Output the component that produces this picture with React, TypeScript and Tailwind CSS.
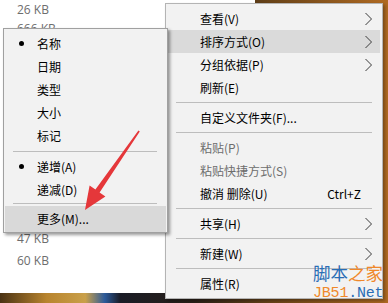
type Row =
  | { kind: 'sep'; h?: string }
  | {
      kind: 'item';
      label: string;
      bullet?: boolean;
      arrow?: boolean;
      disabled?: boolean;
      shortcut?: string;
      active?: boolean;
      h?: string;
    };

const rightRows: Row[] = [
  { kind: 'item', label: '查看(V)', arrow: true },
  { kind: 'item', label: '排序方式(O)', arrow: true, active: true },
  { kind: 'item', label: '分组依据(P)', arrow: true },
  { kind: 'item', label: '刷新(E)' },
  { kind: 'sep' },
  { kind: 'item', label: '自定义文件夹(F)...' },
  { kind: 'sep' },
  { kind: 'item', label: '粘贴(P)', disabled: true },
  { kind: 'item', label: '粘贴快捷方式(S)', disabled: true },
  { kind: 'item', label: '撤消 删除(U)', shortcut: 'Ctrl+Z' },
  { kind: 'sep' },
  { kind: 'item', label: '共享(H)', arrow: true },
  { kind: 'sep' },
  { kind: 'item', label: '新建(W)', arrow: true },
  { kind: 'sep' },
  { kind: 'item', label: '属性(R)' },
];

const leftRows: Row[] = [
  { kind: 'item', label: '名称', bullet: true },
  { kind: 'item', label: '日期' },
  { kind: 'item', label: '类型' },
  { kind: 'item', label: '大小' },
  { kind: 'item', label: '标记' },
  { kind: 'sep', h: 'h-[8px]' },
  { kind: 'item', label: '递增(A)', bullet: true },
  { kind: 'item', label: '递减(D)' },
  { kind: 'sep', h: 'h-[5px]' },
  { kind: 'item', label: '更多(M)...', active: true, h: 'h-[26px]' },
];

function Chevron() {
  return (
    <svg width="9" height="14" viewBox="0 0 9 14" className="flex-shrink-0">
      <path d="M1.5 1 L7.5 7 L1.5 13" fill="none" stroke="#3a3a3a" strokeWidth={1} />
    </svg>
  );
}

function RightMenu() {
  return (
    <div className="absolute left-[165px] top-[3px] w-[218px] h-[296px] bg-[#f2f2f2] border border-[#b4b4b4] shadow-[2px_2px_3px_rgba(0,0,0,0.3)] pt-[3px] flex flex-col">
      {rightRows.map((r, i) =>
        r.kind === 'sep' ? (
          <div key={i} className="h-[7px] flex items-center pl-[10px] pr-[10px]">
            <div className="h-px w-full bg-[#bdbdbd]" />
          </div>
        ) : (
          <div
            key={i}
            className={`h-[23px] mx-[2px] flex items-center pl-[32px] pr-[7px] ${r.active ? 'bg-[#dadada]' : ''}`}
          >
            <span className={`flex-1 ${r.disabled ? 'text-[#6d6d6d]' : 'text-black'}`}>{r.label}</span>
            {r.shortcut && <span className="text-black mr-[12px]">{r.shortcut}</span>}
            {r.arrow && <Chevron />}
          </div>
        )
      )}
    </div>
  );
}

function LeftMenu() {
  return (
    <div className="absolute left-[3px] top-[28px] w-[165px] h-[205px] bg-[#f2f2f2] border border-[#a0a0a0] shadow-[2px_2px_3px_rgba(0,0,0,0.4)] pt-[3px] flex flex-col">
      {leftRows.map((r, i) =>
        r.kind === 'sep' ? (
          <div key={i} className={`${r.h ?? 'h-[7px]'} flex items-center pl-[9px] pr-[10px]`}>
            <div className="h-px w-full bg-[#bdbdbd]" />
          </div>
        ) : (
          <div
            key={i}
            className={`${r.h ?? 'h-[23px]'} mx-[1px] flex items-center ${r.active ? 'bg-[#d9d9d9]' : ''}`}
          >
            <span className="w-[32px] flex justify-center pl-[1px]">
              {r.bullet && <span className="w-[5px] h-[5px] rounded-full bg-black" />}
            </span>
            <span className="text-black">{r.label}</span>
          </div>
        )
      )}
    </div>
  );
}

export default function App() {
  return (
    <div className="relative w-[388px] h-[303px] overflow-hidden font-['Noto_Sans_CJK_SC',sans-serif] text-[12px] bg-[linear-gradient(90deg,#4a3214_0%,#b8842e_12%,#c9a04a_22%,#2c5a9a_27%,#1a1c26_31%,#2a2018_50%,#6a4418_70%,#b06a22_100%)]">
      {/* explorer window */}
      <div className="absolute left-0 top-0 w-[255px] h-[293px] bg-white flex flex-col pl-[17px] pt-[-1px] text-[#6d6d6d] font-['Open_Sans','Noto_Sans_CJK_SC',sans-serif]">
        <div className="h-[19px] flex items-center">26 KB</div>
        <div className="h-[19px] flex items-center">666 KB</div>
        <div className="flex-1" />
        <div className="h-[22px] flex items-center">47 KB</div>
        <div className="h-[22px] flex items-center">60 KB</div>
        <div className="h-[21px]" />
      </div>

      <RightMenu />
      <LeftMenu />

      {/* red arrow */}
      <svg className="absolute left-0 top-0 pointer-events-none" width="388" height="303" viewBox="0 0 388 303">
        <polygon
          points="138.4,130.6 95.4,189.6 89.6,185.4 85,210 105.4,196.6 99.6,192.4 139.8,131.6"
          fill="#e5373a"
        />
      </svg>

      {/* watermark */}
      <div className="absolute left-[313px] top-[264px] flex flex-col leading-none">
        <div className="text-[17.5px] tracking-[0px]">
          <span className="text-[#2a6db5]">脚本</span>
          <span className="text-[#f0882a]">之家</span>
        </div>
        <div className="mt-[4px] text-[15px] font-['Liberation_Mono',monospace] tracking-[-0.2px]">
          <span className="text-[#f0882a]">JB51</span>
          <span className="text-[#2a6db5]">.Net</span>
        </div>
      </div>
    </div>
  );
}
